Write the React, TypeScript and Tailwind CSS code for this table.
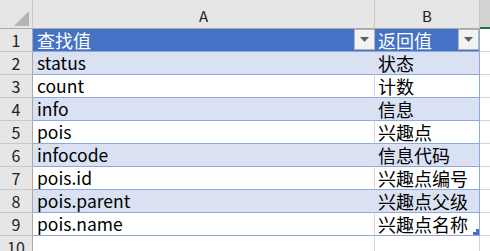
import React from 'react';

const rows = [
  { a: 'status', b: '状态' },
  { a: 'count', b: '计数' },
  { a: 'info', b: '信息' },
  { a: 'pois', b: '兴趣点' },
  { a: 'infocode', b: '信息代码' },
  { a: 'pois.id', b: '兴趣点编号' },
  { a: 'pois.parent', b: '兴趣点父级' },
  { a: 'pois.name', b: '兴趣点名称' },
];

const FilterButton = () => (
  <div className="absolute right-0 top-0 w-[21px] h-[21px] bg-[#f3f3f3] border border-[#b4b4b4] flex items-center justify-center">
    <svg width="9" height="5" viewBox="0 0 9 5">
      <path d="M0 0 H9 L4.5 5 Z" fill="#5f5f5f" />
    </svg>
  </div>
);

const RowHead = ({ n }: { n: number }) => (
  <div className="w-[33px] shrink-0 bg-[#e6e6e6] border-r border-b border-r-[#a9a9a9] border-b-[#c8c8c8] flex items-end justify-center pb-[1px] text-[16px] leading-[20px] text-[#222]">
    {n}
  </div>
);

export default function App() {
  return (
    <div
      className="w-[490px] h-[251px] overflow-hidden bg-white"
      style={{ fontFamily: '"Noto Sans CJK SC", "Noto Sans", sans-serif' }}
    >
      {/* column headers */}
      <div className="flex h-[29px] bg-[#e6e6e6] border-b border-[#a9a9a9]">
        <div className="w-[33px] shrink-0 border-r border-[#c8c8c8] relative">
          <svg className="absolute right-[3px] bottom-[2px]" width="15" height="15" viewBox="0 0 15 15">
            <path d="M15 0 V15 H0 Z" fill="#b4b4b4" />
          </svg>
        </div>
        <div className="w-[342px] shrink-0 border-r border-[#c8c8c8] flex items-end justify-center pb-[2px] text-[15px] leading-[20px] text-[#222]">
          A
        </div>
        <div className="w-[105px] shrink-0 border-r border-[#c8c8c8] flex items-end justify-center pb-[2px] text-[15px] leading-[20px] text-[#222]">
          B
        </div>
        <div className="flex-1 bg-[#d2d2d2] border-b-2 border-[#217346] -mb-[1px]" />
      </div>

      {/* header row */}
      <div className="flex h-[23px]">
        <RowHead n={1} />
        <div className="w-[342px] shrink-0 bg-[#4472c4] border-b border-[#8ea9db] relative pl-[4px] text-white text-[18px] leading-[22px]">
          查找值
          <FilterButton />
        </div>
        <div className="w-[105px] shrink-0 bg-[#4472c4] border-r border-b border-[#8ea9db] relative pl-[3px] text-white text-[18px] leading-[22px]">
          返回值
          <FilterButton />
        </div>
        <div className="flex-1 border-b border-[#d4d4d4]" />
      </div>

      {rows.map((r, i) => {
        const shaded = i % 2 === 0;
        const last = i === rows.length - 1;
        return (
          <div key={r.a} className="flex h-[23px]">
            <RowHead n={i + 2} />
            <div
              className={`w-[342px] shrink-0 border-b border-r border-b-[#8ea9db] pl-[4px] text-[17.5px] leading-[22px] text-black ${
                shaded ? 'bg-[#d9e1f2] border-r-[#d9e1f2]' : 'bg-white border-r-[#d4d4d4]'
              }`}
            >
              {r.a}
            </div>
            <div
              className={`w-[105px] shrink-0 border-r border-b border-[#8ea9db] pl-[3px] text-[18px] leading-[22px] text-black relative ${
                shaded ? 'bg-[#d9e1f2]' : 'bg-white'
              }`}
            >
              {r.b}
              {last && (
                <svg className="absolute right-0 bottom-0" width="6" height="6" viewBox="0 0 6 6">
                  <path d="M6 0 V6 H0 V3 H3 V0 Z" fill="#4472c4" />
                </svg>
              )}
            </div>
            <div className="flex-1 border-b border-[#d4d4d4]" />
          </div>
        );
      })}

      {/* row 10 */}
      <div className="flex h-[23px]">
        <RowHead n={10} />
        <div className="w-[342px] shrink-0 border-r border-b border-[#d4d4d4]" />
        <div className="w-[105px] shrink-0 border-r border-b border-[#d4d4d4]" />
        <div className="flex-1 border-b border-[#d4d4d4]" />
      </div>
    </div>
  );
}
